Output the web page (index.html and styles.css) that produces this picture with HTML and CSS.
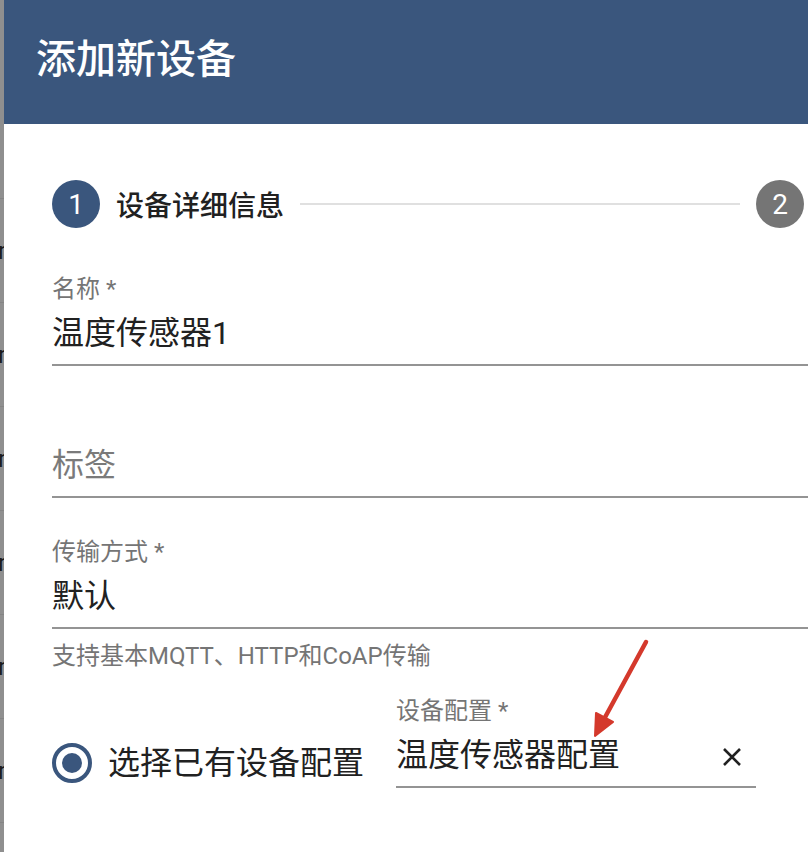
FILE: index.html
```html
<!DOCTYPE html>
<html lang="zh-CN">
<head>
<meta charset="utf-8">
<title>添加新设备</title>
<link rel="stylesheet" href="styles.css">
</head>
<body>
<div class="page">
  <div class="backdrop">
    <div class="bd-top"></div>
    <div class="bd-row"><span class="bd-text">r</span></div>
    <div class="bd-row"><span class="bd-text">r</span></div>
    <div class="bd-row"><span class="bd-text">r</span></div>
    <div class="bd-row"><span class="bd-text">r</span></div>
    <div class="bd-row"><span class="bd-text">r</span></div>
    <div class="bd-row"><span class="bd-text">r</span></div>
    <div class="bd-row"><span class="bd-text">r</span></div>
  </div>
  <div class="dialog">
    <header class="dialog-header">
      <h1 class="dialog-title">添加新设备</h1>
    </header>
    <div class="dialog-body">
      <div class="stepper">
        <div class="step">
          <span class="step-num step-num-active">1</span>
          <span class="step-label">设备详细信息</span>
        </div>
        <div class="step-line"></div>
        <div class="step">
          <span class="step-num step-num-idle">2</span>
        </div>
      </div>

      <div class="field field-first">
        <div class="field-label">名称 *</div>
        <div class="field-value">温度传感器1</div>
      </div>

      <div class="field field-second">
        <div class="field-label"></div>
        <div class="field-value field-placeholder">标签</div>
      </div>

      <div class="field">
        <div class="field-label">传输方式 *</div>
        <div class="field-value">默认</div>
      </div>
      <div class="field-hint">支持基本MQTT、HTTP和CoAP传输</div>

      <div class="profile-row">
        <label class="radio">
          <span class="radio-circle"><span class="radio-dot"></span></span>
          <span class="radio-label">选择已有设备配置</span>
        </label>
        <div class="field field-profile">
          <div class="field-label">设备配置 *</div>
          <div class="field-value field-value-row">
            <span>温度传感器配置</span>
            <svg class="clear-icon" viewBox="0 0 24 24" width="24" height="24">
              <path d="M4 4 L20 20 M20 4 L4 20" stroke="#212121" stroke-width="2.6" stroke-linecap="butt" fill="none"/>
            </svg>
          </div>
        </div>
      </div>
    </div>
  </div>
  <svg class="annotation" width="808" height="852" viewBox="0 0 808 852">
    <line x1="646" y1="642" x2="603" y2="721" stroke="#d4392c" stroke-width="4.5" stroke-linecap="round"/>
    <polygon points="595,736 596,713 613,722" fill="#d4392c" stroke="#d4392c" stroke-width="2" stroke-linejoin="round"/>
  </svg>
</div>
</body>
</html>
```

FILE: styles.css
```css
html, body {
  margin: 0;
  padding: 0;
  width: 808px;
  height: 852px;
  overflow: hidden;
  background: #ffffff;
}

.page {
  position: relative;
  display: flex;
  width: 808px;
  height: 852px;
  overflow: hidden;
  font-family: Roboto, "Noto Sans CJK SC", sans-serif;
}

/* dimmed page behind the dialog */
.backdrop {
  flex: none;
  width: 4px;
  background: #8f8f8f;
  overflow: hidden;
}
.bd-top {
  height: 198px;
}
.bd-row {
  height: 103px;
  border-top: 1px solid #848484;
  display: flex;
  align-items: center;
}
.bd-text {
  margin-left: -2px;
  font-family: Roboto, sans-serif;
  font-size: 24px;
  line-height: 24px;
  color: #1c1c1c;
}

/* dialog */
.dialog {
  flex: none;
  width: 900px;
  background: #ffffff;
}
.dialog-header {
  height: 124px;
  background: #3a567d;
  display: flex;
  align-items: center;
  padding: 0 0 4px 32px;
  box-sizing: border-box;
}
.dialog-title {
  margin: 0;
  font-size: 40px;
  line-height: 48px;
  font-weight: 500;
  color: #ffffff;
}

.dialog-body {
  padding-left: 48px;
}

/* stepper */
.stepper {
  margin-top: 56px;
  width: 752px;
  height: 48px;
  display: flex;
  align-items: center;
}
.step {
  display: flex;
  align-items: center;
}
.step-num {
  width: 48px;
  height: 48px;
  border-radius: 50%;
  display: flex;
  align-items: center;
  justify-content: center;
  color: #ffffff;
  font-family: Roboto, sans-serif;
  font-size: 28px;
}
.step-num-active {
  background: #3a567d;
}
.step-num-idle {
  background: #757575;
}
.step-label {
  margin-left: 16px;
  font-size: 28px;
  font-weight: 500;
  color: #212121;
}
.step-line {
  flex: 1;
  height: 2px;
  margin: 0 16px;
  background: #e0e0e0;
}

/* form fields */
.field {
  width: 800px;
  margin-top: 36px;
  padding-bottom: 5px;
  border-bottom: 2px solid #949494;
}
.field-first {
  margin-top: 43px;
}
.field-second {
  margin-top: 37px;
}
.field-label {
  height: 36px;
  line-height: 36px;
  font-size: 24px;
  color: #757575;
}
.field-value {
  height: 52px;
  line-height: 52px;
  font-size: 32px;
  color: #212121;
}
.field-placeholder {
  color: #7a7a7a;
}
.field-hint {
  margin-top: 11px;
  line-height: 32px;
  font-size: 24px;
  color: #757575;
}

/* profile row */
.profile-row {
  margin-top: 21px;
  display: flex;
  align-items: flex-start;
}
.radio {
  margin-top: 50px;
  display: flex;
  align-items: center;
}
.radio-circle {
  width: 40px;
  height: 40px;
  box-sizing: border-box;
  border: 4px solid #3a567d;
  border-radius: 50%;
  display: flex;
  align-items: center;
  justify-content: center;
}
.radio-dot {
  width: 20px;
  height: 20px;
  border-radius: 50%;
  background: #3a567d;
}
.radio-label {
  margin-left: 16px;
  font-size: 32px;
  line-height: 40px;
  color: #212121;
}
.field-profile {
  width: 360px;
  margin-top: 0;
  margin-left: 32px;
}
.field-value-row {
  display: flex;
  align-items: center;
  justify-content: space-between;
}
.clear-icon {
  margin-right: 12px;
  margin-top: 4px;
}

/* annotation arrow */
.annotation {
  position: absolute;
  left: 0;
  top: 0;
  pointer-events: none;
}
```
